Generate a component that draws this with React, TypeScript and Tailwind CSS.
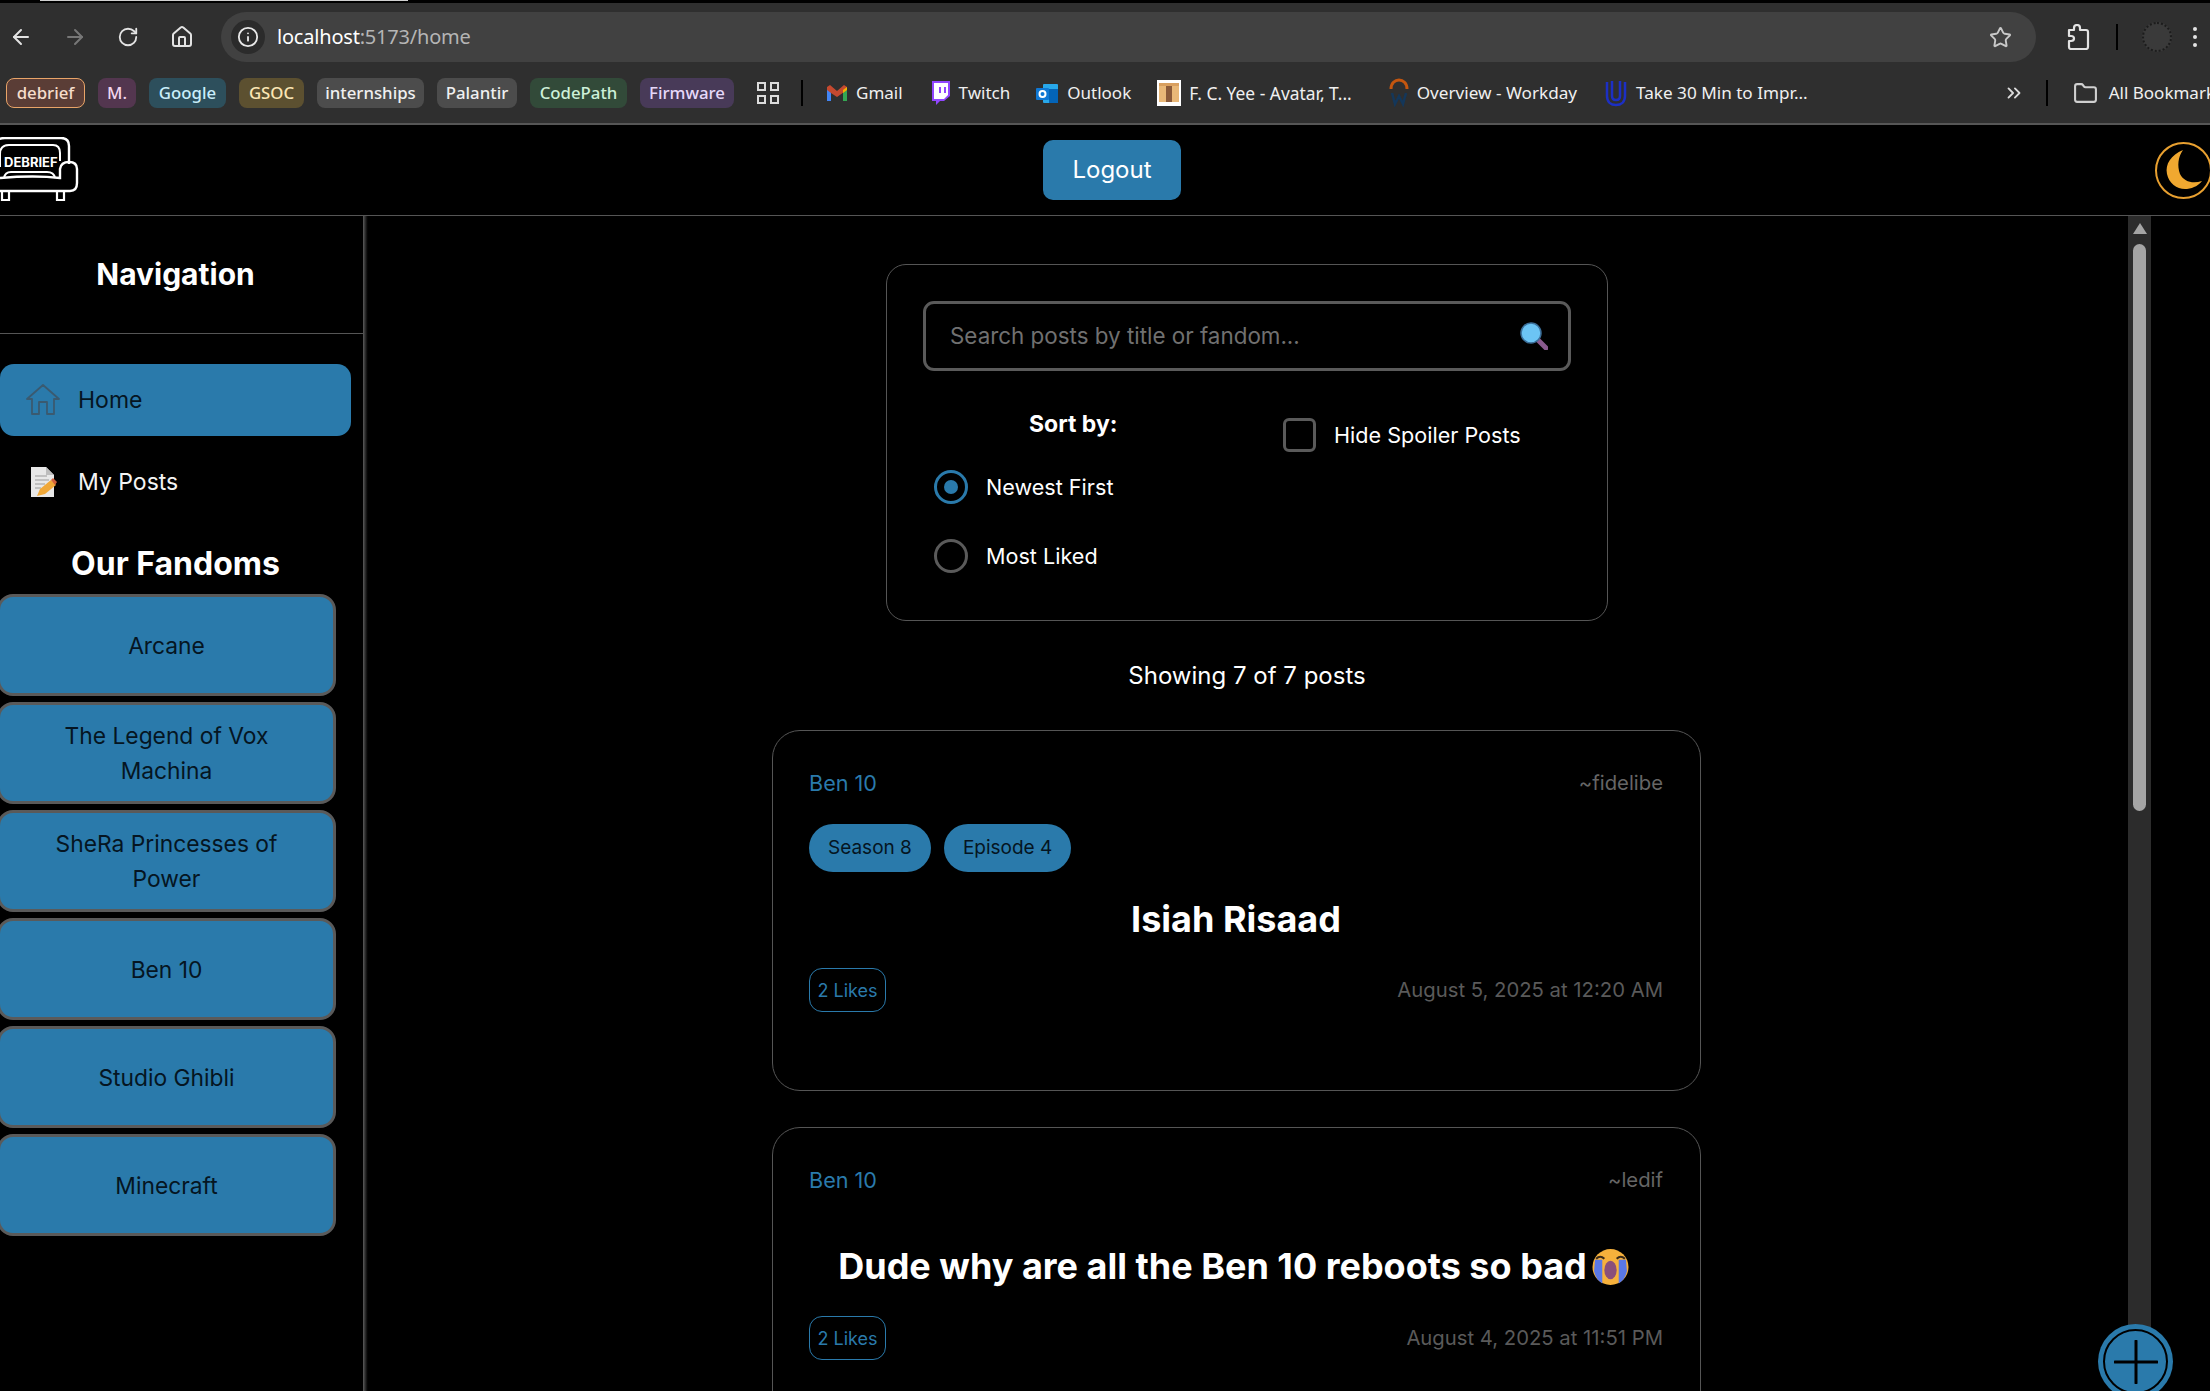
import { ArrowLeft, ArrowRight, RotateCw, House, Info, Star, ChevronsRight, Folder } from "lucide-react";

const chips = [
  { t: "debrief", w: "w-[79px] bg-[#5a3d36] border border-[#e8a468]", c: "text-[#f6ddcb]" },
  { t: "M.", w: "w-[38px] bg-[#53364f]", c: "text-[#f3d6ee]" },
  { t: "Google", w: "w-[77px] bg-[#2d4f5c]", c: "text-[#c9eefa]" },
  { t: "GSOC", w: "w-[65px] bg-[#5c5030]", c: "text-[#fbe6b4]" },
  { t: "internships", w: "w-[107px] bg-[#4c4c4c]", c: "text-[#f0f0f0]" },
  { t: "Palantir", w: "w-[80px] bg-[#4c4c4c]", c: "text-[#f0f0f0]" },
  { t: "CodePath", w: "w-[97px] bg-[#324a39]", c: "text-[#cdf0d8]" },
  { t: "Firmware", w: "w-[94px] bg-[#483a58]", c: "text-[#e6d8f8]" },
];

function Gmail() {
  return (
    <svg width="22" height="18" viewBox="0 0 22 18" className="shrink-0">
      <path d="M1 17V3l4 3v11z" fill="#4285f4" />
      <path d="M17 17V6l4-3v14z" fill="#34a853" />
      <path d="M1 3l3-2 7 6 7-6 3 2v3l-10 7L5 9 1 6z" fill="#c5492f" />
      <path d="M17 6l4-3v3l-4 3z" fill="#f4b400" />
    </svg>
  );
}
function Twitch() {
  return (
    <svg width="22" height="26" viewBox="0 0 22 26" className="shrink-0">
      <path d="M3 1h18v15l-6 5h-4l-4 4v-4H3z" fill="#9146ff" />
      <path d="M5 3h14v12l-4 4H5z" fill="#fff" />
      <path d="M10 7h2v6h-2zM15 7h2v6h-2z" fill="#9146ff" />
    </svg>
  );
}
function Outlook() {
  return (
    <svg width="24" height="24" viewBox="0 0 24 24" className="shrink-0">
      <rect x="8" y="3" width="15" height="19" rx="1" fill="#28a8ea" />
      <rect x="14" y="8" width="9" height="14" fill="#0364b8" />
      <rect x="1" y="7" width="13" height="12" rx="1" fill="#0f78d4" />
      <circle cx="7.5" cy="13" r="3" fill="none" stroke="#fff" strokeWidth="2" />
    </svg>
  );
}
function Book() {
  return (
    <svg width="24" height="26" viewBox="0 0 24 26" className="shrink-0">
      <rect width="24" height="26" fill="#fff" />
      <rect x="2" y="3" width="20" height="19" fill="#e9b878" />
      <rect x="9" y="3" width="6" height="19" fill="#8a5a3a" />
      <rect x="2" y="3" width="20" height="3" fill="#d9a060" />
    </svg>
  );
}
function Workday() {
  return (
    <svg width="20" height="30" viewBox="0 0 20 30" className="shrink-0">
      <path d="M2 11C2 5 6 2 10 2s8 3 8 9" fill="none" stroke="#c4560f" strokeWidth="3" />
      <path d="M3 15l3 11 4-8 4 8 3-11" fill="none" stroke="#14375a" strokeWidth="2.5" />
    </svg>
  );
}
function Udemy() {
  return (
    <svg width="24" height="30" viewBox="0 0 24 30" className="shrink-0">
      <path d="M3 4v14c0 6 4 9 9 9s9-3 9-9V4" fill="none" stroke="#1c2fc4" strokeWidth="2.5" />
      <path d="M8 3v15c0 3 2 4 4 4s4-1 4-4V3" fill="none" stroke="#1c2fc4" strokeWidth="2.5" />
    </svg>
  );
}
function Ext() {
  return (
    <svg width="24" height="26" viewBox="0 0 24 26" fill="none" stroke="#e3e3e3" strokeWidth="2.2" strokeLinejoin="round" className="ml-[30px] shrink-0">
      <path d="M3 6h5V4q0-3 3-3t3 3v2h6q2 0 2 2v15q0 2-2 2H5q-2 0-2-2v-6h2q3 0 3-2.5T5 12H3z" />
    </svg>
  );
}

function Mark({ icon, label, ml, size }: { icon: React.ReactNode; label: string; ml: string; size: string }) {
  return (
    <div className={`flex items-center gap-[8px] shrink-0 ${ml}`}>
      {icon}
      <span className={`text-[#f0f0f0] whitespace-nowrap ${size}`}>{label}</span>
    </div>
  );
}

function ChromeBar() {
  return (
    <div className="shrink-0 bg-[#2f2f2f] font-['Noto_Sans',sans-serif] overflow-hidden">
      <div className="h-[3px] bg-black pl-[40px]">
        <div className="w-[368px] h-[1px] bg-[#cfcfcf]" />
      </div>
      <div className="h-[68px] flex items-center">
        <ArrowLeft className="ml-[9px] text-[#e3e3e3]" size={24} />
        <ArrowRight className="ml-[30px] text-[#777]" size={24} />
        <RotateCw className="ml-[30px] text-[#e3e3e3]" size={22} />
        <House className="ml-[31px] text-[#e3e3e3]" size={24} />
        <div className="ml-[27px] w-[1815px] h-[50px] rounded-full bg-[#414141] flex items-center pl-[10px] pr-[24px] shrink-0">
          <div className="w-[34px] h-[34px] rounded-full bg-[#2b2b2b] flex items-center justify-center">
            <Info className="text-[#e8e8e8]" size={22} />
          </div>
          <span className="ml-[12px] text-[20px] text-white tracking-[-0.2px]">localhost<span className="text-[#b5b5b5]">:5173/home</span></span>
          <Star className="ml-auto text-[#c8c8c8]" size={23} />
        </div>
        <Ext />
        <div className="ml-[26px] w-[2px] h-[26px] bg-black shrink-0" />
        <div className="ml-[24px] w-[30px] h-[30px] rounded-full bg-[#3a3a3a] border-2 border-dotted border-[#1c1c1c] shrink-0" />
        <div className="ml-[21px] flex flex-col gap-[4px] shrink-0">
          <div className="w-[4px] h-[4px] rounded-full bg-[#e3e3e3]" />
          <div className="w-[4px] h-[4px] rounded-full bg-[#e3e3e3]" />
          <div className="w-[4px] h-[4px] rounded-full bg-[#e3e3e3]" />
        </div>
      </div>
      <div className="h-[52px] flex items-center pl-[6px] pb-[8px]">
        <div className="flex gap-[13px] shrink-0">
          {chips.map((c) => (
            <div key={c.t} className={`h-[30px] rounded-[8px] flex items-center justify-center text-[16.8px] font-medium shrink-0 ${c.w} ${c.c}`}>
              {c.t}
            </div>
          ))}
        </div>
        <div className="ml-[23px] grid grid-cols-2 gap-[4px] shrink-0">
          <div className="w-[9px] h-[9px] border-2 border-[#dcdcdc]" />
          <div className="w-[9px] h-[9px] border-2 border-[#dcdcdc]" />
          <div className="w-[9px] h-[9px] border-2 border-[#dcdcdc]" />
          <div className="w-[9px] h-[9px] border-2 border-[#dcdcdc]" />
        </div>
        <div className="ml-[22px] w-[2px] h-[26px] bg-black shrink-0" />
        <Mark ml="ml-[23px]" size="text-[17px]" icon={<Gmail />} label="Gmail" />
        <Mark ml="ml-[26px]" size="text-[17px]" icon={<Twitch />} label="Twitch" />
        <Mark ml="ml-[25px]" size="text-[17px]" icon={<Outlook />} label="Outlook" />
        <Mark ml="ml-[26px]" size="text-[17.4px]" icon={<Book />} label="F. C. Yee - Avatar, T..." />
        <Mark ml="ml-[37px]" size="text-[17.15px]" icon={<Workday />} label="Overview - Workday" />
        <Mark ml="ml-[27px]" size="text-[17.15px]" icon={<Udemy />} label="Take 30 Min to Impr..." />
        <ChevronsRight className="ml-[195px] text-[#dcdcdc] shrink-0" size={22} />
        <div className="ml-[21px] w-[2px] h-[26px] bg-black shrink-0" />
        <Folder className="ml-[25px] text-[#d0d0d0] shrink-0" size={25} />
        <span className="ml-[11px] text-[#f0f0f0] text-[17px] whitespace-nowrap">All Bookmarks</span>
      </div>
      <div className="h-[2px] bg-[#565656]" />
    </div>
  );
}

function Logo() {
  return (
    <svg width="80" height="66" viewBox="0 0 80 66" className="shrink-0 text-white" fill="none" stroke="currentColor" strokeWidth="2.4">
      <path d="M-4 30V8q0-7 9-7h56q8 0 8 8v18" />
      <path d="M0 30V17q0-9 9-9h44q7 0 7 8v8" strokeWidth="2" />
      <path d="M-4 54h74q7 0 7-8V32q0-7-8-7t-9 7v9q-25-3-60 0" />
      <path d="M4 41q1-6 7-6h36q7 0 8 6" strokeWidth="2" />
      <path d="M2 54v9h7v-9M57 54v9h7v-9" strokeWidth="2.2" />
      <text x="4" y="30" fontSize="13" fontWeight="700" fontFamily="Inter, sans-serif" fill="currentColor" stroke="none">DEBRIEF</text>
    </svg>
  );
}

function Header() {
  return (
    <div className="h-[91px] shrink-0 bg-black border-b border-[#555] relative flex items-center justify-between font-['Inter',sans-serif] overflow-hidden">
      <Logo />
      <button className="absolute left-[1043px] top-[15px] w-[138px] h-[60px] rounded-[10px] bg-[#2a7aab] text-white text-[24px]">Logout</button>
      <div className="w-[57px] h-[57px] rounded-full border-2 border-[#e8a030] shrink-0 -mr-[2px] flex items-center justify-center">
        <svg width="38" height="42" viewBox="0 0 38 42">
          <path d="M18 1C6 6 0 15 2 25c2 10 11 16 20 15 7-1 12-4 15-8-9 3-18 1-22-7C12 17 13 8 18 1z" fill="#f0a830" />
        </svg>
      </div>
    </div>
  );
}

const fandoms = ["Arcane", "The Legend of Vox Machina", "SheRa Princesses of Power", "Ben 10", "Studio Ghibli", "Minecraft"];

function HomeIcon() {
  return (
    <svg width="34" height="32" viewBox="0 0 34 32" fill="none" stroke="#3a5a70" strokeWidth="1.8" strokeLinejoin="round">
      <path d="M1 15L17 1l16 14h-5v15H21V18h-8v12H6V15z" />
    </svg>
  );
}
function DocIcon() {
  return (
    <svg width="26" height="30" viewBox="0 0 26 30">
      <path d="M0 0h15l8 8v22H0z" fill="#e8e8e8" />
      <path d="M15 0l8 8h-8z" fill="#bdbdbd" />
      <path d="M4 9h12M4 13h14M4 17h10M4 21h6" stroke="#9a9a9a" strokeWidth="1.2" />
      <path d="M6 29l3-7 11-9 5 5-11 9z" fill="#f0a838" />
      <path d="M20 13l2-2 4 4-2 3z" fill="#d2603a" />
    </svg>
  );
}

function Sidebar() {
  return (
    <div className="w-[369px] shrink-0 flex font-['Inter',sans-serif]">
      <div className="w-[363px] flex flex-col">
        <div className="h-[118px] border-b border-[#555] flex items-center justify-center text-white font-bold text-[30px] pb-[1px] pr-[12px]">Navigation</div>
        <div className="mt-[30px] w-[351px] h-[72px] rounded-[14px] bg-[#2a7aab] flex items-center pl-[26px] gap-[18px] text-[#051522] text-[23px]">
          <HomeIcon />
          <span>Home</span>
        </div>
        <div className="mt-[10px] w-[351px] h-[72px] flex items-center pl-[31px] gap-[21px] text-[#f4f4f4] text-[23px]">
          <DocIcon />
          <span>My Posts</span>
        </div>
        <div className="w-[351px] h-[46px] mt-[23px] flex items-center justify-center text-white font-bold text-[32px]">Our Fandoms</div>
        <div className="mt-[7px] flex flex-col gap-[6px] -ml-[3px]">
          {fandoms.map((f) => (
            <div key={f} className="w-[339px] h-[102px] rounded-[16px] border-[3px] border-[#5a5a5a] bg-[#2a7aab] flex items-center justify-center text-center px-[30px] text-[#051522] text-[22.8px] leading-[35px]">
              {f}
            </div>
          ))}
        </div>
      </div>
      <div className="w-[6px] bg-linear-to-r from-[#5c5c5c] to-black" />
    </div>
  );
}

function CryFace() {
  return (
    <svg width="37" height="38" viewBox="0 0 36 36" className="inline-block align-[-7px] ml-[5px]">
      <circle cx="18" cy="18" r="17.5" fill="#f6b13c" />
      <path d="M3 11h7v23q-6-3-8-12zM26 11h7l1 11q-2 9-8 12z" fill="#5a78e6" />
      <ellipse cx="18" cy="21" rx="6" ry="9" fill="#8a4f7a" />
      <path d="M4 10q4-4 8 0M24 10q4-4 8 0" fill="none" stroke="#3a2a1a" strokeWidth="2" />
    </svg>
  );
}

function Post({ author, date, tags, title, emoji, h, mt }: { author: string; date: string; tags?: string[]; title: string; emoji?: boolean; h: string; mt: string }) {
  return (
    <div className={`ml-[403px] w-[929px] shrink-0 border border-[#555] rounded-[28px] pl-[36px] pr-[37px] pt-[35px] ${h} ${mt}`}>
      <div className="flex items-center justify-between h-[34px] text-[21.6px]">
        <span className="text-[#2a7aab]">Ben 10</span>
        <span className="text-[#666666] text-[20.3px]">{author}</span>
      </div>
      {tags ? (
        <div className="mt-[24px] flex gap-[13px] h-[48px]">
          {tags.map((t) => (
            <span key={t} className="h-[48px] px-[19px] rounded-full bg-[#2a7aab] text-[#051522] text-[19px] flex items-center">{t}</span>
          ))}
        </div>
      ) : (
        <div className="h-[18px]" />
      )}
      <div className={`text-center text-white font-bold text-[36px] h-[52px] leading-[52px] ${tags ? "mt-[21px]" : "mt-[25px] pr-[5px]"} whitespace-nowrap`}>
        {title}
        {emoji && <CryFace />}
      </div>
      <div className={`flex items-center justify-between ${tags ? "mt-[23px]" : "mt-[24px]"}`}>
        <span className="h-[44px] w-[77px] rounded-[13px] border border-[#2a7aab] text-[#2a7aab] text-[18px] flex items-center justify-center">2 Likes</span>
        <span className="text-[#5a5a5a] text-[20.3px]">{date}</span>
      </div>
    </div>
  );
}

function Main() {
  return (
    <div className="flex-1 min-w-0 overflow-hidden flex flex-col font-['Inter',sans-serif]">
      <div className="ml-[517px] mt-[48px] w-[722px] h-[357px] shrink-0 border border-[#555] rounded-[20px] pl-[36px] pr-[36px] pt-[36px]">
        <div className="h-[70px] rounded-[11px] border-[3px] border-[#5a5a5a] flex items-center justify-between pl-[24px] pr-[20px]">
          <span className="text-[#707070] text-[22.4px]">Search posts by title or fandom...</span>
          <svg width="28" height="28" viewBox="0 0 28 28">
            <path d="M17 17l9 9" stroke="#8a5a8e" strokeWidth="5" strokeLinecap="round" />
            <circle cx="11" cy="11" r="10" fill="#6cc4f4" stroke="#3b6f9a" strokeWidth="1.5" />
          </svg>
        </div>
        <div className="flex mt-[34px] pl-[1px]">
          <div className="w-[358px] shrink-0">
            <div className="text-white font-bold text-[23px] pl-[105px] h-[38px] leading-[38px]">Sort by:</div>
            <div className="mt-[27px] flex items-center pl-[10px] gap-[18px] h-[34px]">
              <div className="w-[34px] h-[34px] rounded-full border-[3px] border-[#2a7aab] flex items-center justify-center">
                <div className="w-[14px] h-[14px] rounded-full bg-[#2a7aab]" />
              </div>
              <span className="text-white text-[21.6px]">Newest First</span>
            </div>
            <div className="mt-[35px] flex items-center pl-[10px] gap-[18px] h-[34px]">
              <div className="w-[34px] h-[34px] rounded-full border-[3px] border-[#5a5a5a]" />
              <span className="text-white text-[21.6px]">Most Liked</span>
            </div>
          </div>
          <div className="flex items-center gap-[18px] h-[34px] mt-[13px] ml-[1px]">
            <div className="w-[33px] h-[34px] rounded-[6px] border-[3px] border-[#5a5a5a]" />
            <span className="text-white text-[21.6px]">Hide Spoiler Posts</span>
          </div>
        </div>
      </div>
      <div className="mt-[37px] h-[36px] ml-[517px] w-[722px] shrink-0 flex items-center justify-center text-white text-[24px]">Showing 7 of 7 posts</div>
      <Post mt="mt-[36px]" h="h-[361px]" author="~fidelibe" date="August 5, 2025 at 12:20 AM" tags={["Season 8", "Episode 4"]} title="Isiah Risaad" />
      <Post mt="mt-[36px]" h="h-[400px]" author="~ledif" date="August 4, 2025 at 11:51 PM" title="Dude why are all the Ben 10 reboots so bad" emoji />
    </div>
  );
}

function Scrollbar() {
  return (
    <div className="w-[23px] shrink-0 bg-[#2c2c2c] flex flex-col items-center pt-[7px]">
      <div className="w-0 h-0 border-l-[7px] border-r-[7px] border-b-[11px] border-l-transparent border-r-transparent border-b-[#a5a5a5]" />
      <div className="mt-[10px] w-[13px] h-[567px] rounded-full bg-[#a5a5a5]" />
    </div>
  );
}

export default function App() {
  return (
    <div className="w-[2210px] h-[1391px] bg-black flex flex-col overflow-hidden relative">
      <ChromeBar />
      <Header />
      <div className="flex-1 min-h-0 flex pr-[59px]">
        <Sidebar />
        <Main />
        <Scrollbar />
      </div>
      <div className="absolute left-[2098px] top-[1324px] w-[75px] h-[75px] rounded-full bg-[#2a7aab] flex items-center justify-center">
        <div className="w-[65px] h-[65px] rounded-full border-2 border-black flex items-center justify-center">
          <svg width="44" height="44" viewBox="0 0 44 44" stroke="black" strokeWidth="3" strokeLinecap="round">
            <path d="M22 1v42M1 22h42" />
          </svg>
        </div>
      </div>
    </div>
  );
}
